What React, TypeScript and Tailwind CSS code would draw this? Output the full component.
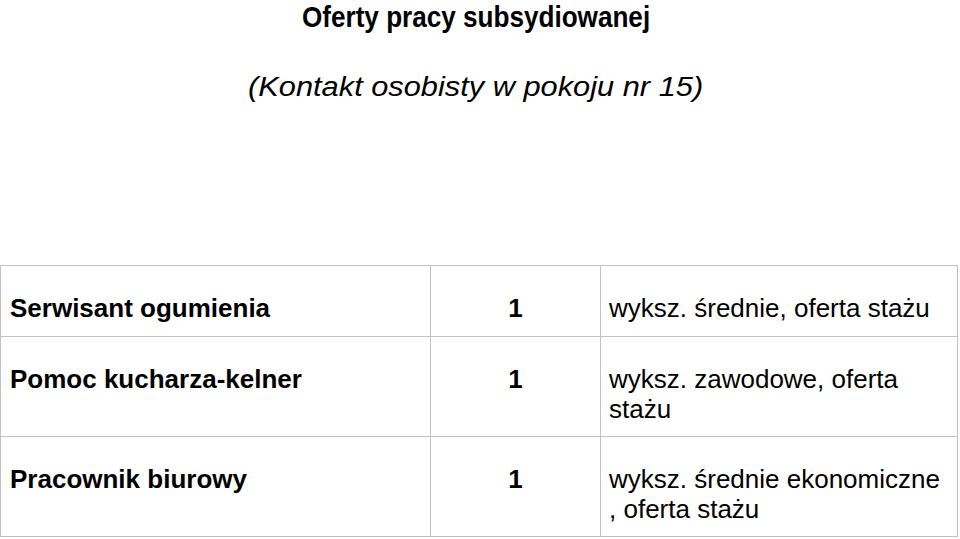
import React from 'react';

const rows = [
  { name: 'Serwisant ogumienia', count: '1', desc: ['wyksz. średnie, oferta stażu'], h: 'h-[71px]' },
  { name: 'Pomoc kucharza-kelner', count: '1', desc: ['wyksz. zawodowe, oferta', 'stażu'], h: 'h-[100px]' },
  { name: 'Pracownik biurowy', count: '1', desc: ['wyksz. średnie ekonomiczne', ', oferta stażu'], h: 'h-[100px]' },
];

export default function App() {
  return (
    <div className="w-[960px] h-[539px] overflow-hidden bg-white text-black font-['Liberation_Sans',Arial,sans-serif]">
      {/* header, slightly left of page centre like the source */}
      <div className="w-[952px] flex justify-center">
        <h1 className="text-[30px] leading-[34px] font-bold scale-x-[0.87]">Oferty pracy subsydiowanej</h1>
      </div>
      <div className="w-[952px] flex justify-center mt-[38px]">
        <p className="text-[27px] leading-[30px] italic scale-x-[1.14]">(Kontakt osobisty w pokoju nr 15)</p>
      </div>
      <table className="mt-[163px] w-[958px] table-fixed border-collapse text-[26px]">
        <colgroup>
          <col className="w-[430px]" />
          <col className="w-[170px]" />
          <col />
        </colgroup>
        <tbody>
          {rows.map((r) => (
            <tr key={r.name} className={r.h}>
              <td className="border border-[#c2c2c2] align-top pl-[9px] pt-[27px] font-bold leading-[30px]">{r.name}</td>
              <td className="border border-[#c2c2c2] align-top text-center pt-[27px] font-bold leading-[30px]">{r.count}</td>
              <td className="border border-[#c2c2c2] align-top pl-[8px] pt-[27px] leading-[30px]">
                {r.desc.map((d) => (
                  <div key={d}>{d}</div>
                ))}
              </td>
            </tr>
          ))}
        </tbody>
      </table>
    </div>
  );
}
